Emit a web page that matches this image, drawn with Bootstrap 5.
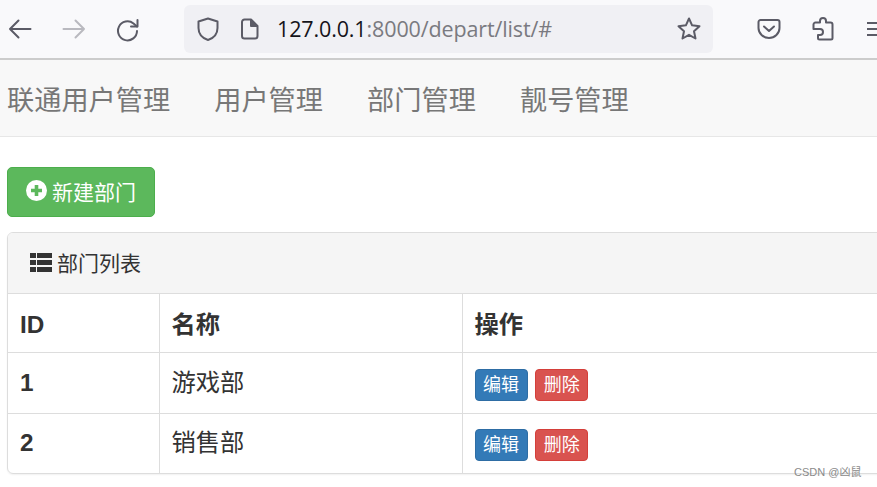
<!DOCTYPE html>
<html lang="zh">
<head>
<meta charset="utf-8">
<title>部门列表</title>
<link href="https://cdn.jsdelivr.net/npm/bootstrap@5.3.0/dist/css/bootstrap.min.css" rel="stylesheet">
<style>
html,body{height:487px;overflow:hidden;background:#fff}
body{font-family:"Liberation Sans","Noto Sans CJK SC",sans-serif;color:#333;position:relative}
.tb-bar{height:60px;background:#f9f9fb;border-bottom:2px solid #ccc;width:877px;overflow:hidden;padding-left:8px}
.tb-ic{flex:none;display:block}
.tb-url{width:529px;height:48px;background:#f0f0f4;border-radius:6px;margin-left:44px;padding-left:13px;padding-right:11px;flex:none}
.tb-text{font-family:"Open Sans",sans-serif;font-size:21.5px;color:#15141a;margin-left:18px;white-space:nowrap;letter-spacing:-.13px}
.tb-text span{color:#7a7a80}
.app-nav{height:77px;background:#f8f8f8;border-bottom:1px solid #e7e7e7;padding:3px 7px 0;gap:44.1px}
.app-nav a{font-size:27.2px;color:#777;text-decoration:none;line-height:76px}
.page-wrap{padding:30px 0 0 7px;width:1100px}
.btn-new{background:#5cb85c;border:1px solid #4cae4c;color:#fff;font-size:21px;height:50px;width:148px;border-radius:5px;padding:1px 0 0;gap:5px}
.btn-new:hover{background:#5cb85c;color:#fff;border-color:#4cae4c}
.btn-new svg{margin-top:-4px}
.dept-panel{margin-top:15px;border:1px solid #ddd;border-radius:6px;box-shadow:0 1px 2px rgba(0,0,0,.06);overflow:hidden}
.dept-head{height:61px;background:#f5f5f5;border-bottom:1px solid #ddd;padding:1px 0 0 22px;font-size:21px;gap:5px}
.dept-head svg{margin-top:-3px}
.dept-table{margin:0;color:#333;font-size:24.3px;table-layout:fixed;width:100%;--bs-table-color:#333}
.dept-table th,.dept-table td{border-right:1px solid #ddd;border-bottom:1px solid #ddd;padding:0 12px;vertical-align:middle;font-weight:400}
.dept-table th{padding-top:4px}
.dept-table th,.dept-table tbody td:first-child{font-weight:700}
.dept-table tr:last-child td{border-bottom:0}
.dept-table .col-a{width:151px}
.dept-table .col-b{width:303px}
.rh{height:58px}
.rb{height:61px}
.rb td{padding-top:2px}
.rc{height:60px}
.mini{font-size:18px;height:32px;width:53px;padding:0;border-radius:4px;line-height:30px;color:#fff;display:inline-block;vertical-align:middle}
.mini-edit{background:#337ab7;border:1px solid #2e6da4}
.mini-del{background:#d9534f;border:1px solid #d43f3a;margin-left:1px}
.mini:hover{color:#fff}
.mark-wm{position:absolute;left:794px;top:464px;font-size:11px;color:#8a8a8a;background:transparent;white-space:nowrap}
</style>
</head>
<body>
<div class="tb-bar d-flex align-items-center">
  <svg class="tb-ic" width="24" height="24" viewBox="0 0 24 24" fill="none" stroke="#5b5b66" stroke-width="2" stroke-linecap="round" stroke-linejoin="round"><path d="M22.500 12H2M10.500 3.500 2 12l8.500 8.500"/></svg>
  <svg class="tb-ic" style="margin-left:30px" width="24" height="24" viewBox="0 0 24 24" fill="none" stroke="#b9b9bf" stroke-width="2" stroke-linecap="round" stroke-linejoin="round"><path d="M1.500 12H22M13.500 3.500 22 12l-8.500 8.500"/></svg>
  <svg class="tb-ic" style="margin-left:30px;margin-top:2px" width="24" height="24" viewBox="0 0 24 24" fill="none" stroke="#5b5b66" stroke-width="2" stroke-linecap="round" stroke-linejoin="round"><path d="M21 13a9.500 9.500 0 1 1-3.500-7.500l3.500 3"/><path d="M21.500 2v6.500H15" /></svg>
  <div class="tb-url d-flex align-items-center">
    <svg class="tb-ic" width="22" height="24" viewBox="0 0 22 24" fill="none" stroke="#5b5b66" stroke-width="2" stroke-linejoin="round"><path d="M11 1.500 20.500 4.500V11c0 6-3.500 10-9.500 12C5 21 1.500 17 1.500 11V4.500Z"/></svg>
    <svg class="tb-ic" style="margin-left:22px" width="18" height="22" viewBox="0 0 18 22" fill="none" stroke="#5b5b66" stroke-width="2" stroke-linejoin="round"><path d="M3.500 1.500H10L16.500 8V18a2.500 2.500 0 0 1-2.500 2.500H3.500A2.500 2.500 0 0 1 1 18V4a2.500 2.500 0 0 1 2.500-2.500Z"/><path d="M10 1.500V8h6.500" fill="#5b5b66"/></svg>
    <div class="tb-text">127.0.0.1<span>:8000/depart/list/#</span></div>
    <svg class="tb-ic ms-auto" width="26" height="26" viewBox="0 0 26 26" fill="none" stroke="#5b5b66" stroke-width="2" stroke-linejoin="round"><path d="M13 2.500 16.100 9.300 23.500 10.200 18 15.200 19.500 22.500 13 18.800 6.500 22.500 8 15.200 2.500 10.200 9.900 9.300Z"/></svg>
  </div>
  <svg class="tb-ic" style="margin-left:44px" width="24" height="22" viewBox="0 0 24 22" fill="none" stroke="#5b5b66" stroke-width="2" stroke-linecap="round" stroke-linejoin="round"><path d="M3.500 2H20.500A2 2 0 0 1 22.500 4V10A10.500 10 0 0 1 1.500 10V4A2 2 0 0 1 3.500 2Z"/><path d="M7 8.500 12 13l5-4.500"/></svg>
  <svg class="tb-ic" style="margin-left:31px" width="22" height="24" viewBox="0 0 22 24" fill="none" stroke="#5b5b66" stroke-width="2" stroke-linejoin="round"><path d="M8 5.500V4a3 3 0 0 1 6 0v1.500h4.500a2 2 0 0 1 2 2V21a1.500 1.500 0 0 1-1.500 1.500H7.500a1.500 1.500 0 0 1-1.500-1.500V18H8a3 3 0 0 0 0-6H1.500V7.500a2 2 0 0 1 2-2Z"/></svg>
  <svg class="tb-ic" style="margin-left:33px" width="14" height="16" viewBox="0 0 14 16" fill="none" stroke="#5b5b66" stroke-width="2"><path d="M0 2h14M0 8h14M0 14h14"/></svg>
</div>
<nav class="app-nav d-flex">
  <a href="#">联通用户管理</a>
  <a href="#">用户管理</a>
  <a href="#">部门管理</a>
  <a href="#">靓号管理</a>
</nav>
<div class="page-wrap">
  <a href="#" class="btn btn-new d-inline-flex align-items-center justify-content-center">
    <svg width="21" height="21" viewBox="0 0 21 21"><circle cx="10.500" cy="10.500" r="10.500" fill="#fff"/><path d="M10.500 5v11M5 10.500h11" stroke="#5cb85c" stroke-width="3.600"/></svg>新建部门
  </a>
  <div class="dept-panel">
    <div class="dept-head d-flex align-items-center">
      <svg width="22" height="19" viewBox="0 0 22 19" fill="#333"><path d="M0 0h6v5H0zM7 0h15v5H7zM0 7h6v5H0zM7 7h15v5H7zM0 14h6v5H0zM7 14h15v5H7z"/></svg>部门列表
    </div>
    <table class="table dept-table">
      <thead>
        <tr class="rh"><th class="col-a">ID</th><th class="col-b">名称</th><th>操作</th></tr>
      </thead>
      <tbody>
        <tr class="rb"><td>1</td><td>游戏部</td><td><a href="#" class="btn mini mini-edit">编辑</a> <a href="#" class="btn mini mini-del">删除</a></td></tr>
        <tr class="rc"><td>2</td><td>销售部</td><td><a href="#" class="btn mini mini-edit">编辑</a> <a href="#" class="btn mini mini-del">删除</a></td></tr>
      </tbody>
    </table>
  </div>
</div>
<div class="mark-wm">CSDN @凶鼠</div>
<script src="https://cdn.jsdelivr.net/npm/bootstrap@5.3.0/dist/js/bootstrap.bundle.min.js"></script>
</body>
</html>
